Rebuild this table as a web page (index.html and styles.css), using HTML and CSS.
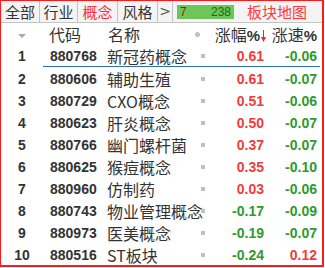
FILE: index.html
```html
<!DOCTYPE html>
<html>
<head>
<meta charset="utf-8">
<link rel="stylesheet" href="styles.css">
</head>
<body>
<div class="panel">
  <div class="tabs">
    <div class="tab w39">全部</div>
    <div class="tab w38">行业</div>
    <div class="tab w40 active">概念</div>
    <div class="tab w40">风格</div>
    <div class="tab arrow">&gt;</div>
    <div class="bar"><span class="bar-a">7</span><span class="bar-b">238</span></div>
    <div class="map">板块地图</div>
  </div>
  <div class="row head">
    <div class="c-num"><span class="tri"></span></div>
    <div class="c-code">代码</div>
    <div class="c-name">名称</div>
    <div class="c-dot"><span class="dot round"></span></div>
    <div class="c-pct">涨幅<b>%</b><svg class="down" width="5" height="12" viewBox="0 0 5 12"><path d="M2.5 0V11" stroke="#ff2020" stroke-width="1"/><path d="M0 7L2.5 12L5 7Z" fill="#ff2020"/></svg></div>
    <div class="c-spd">涨速<b>%</b></div>
  </div>
  <div class="row sel"><div class="c-num">1</div><div class="c-code">880768</div><div class="c-name">新冠药概念</div><div class="c-dot"><span class="dot"></span></div><div class="c-pct up">0.61</div><div class="c-spd dn">-0.06</div></div>
  <div class="row"><div class="c-num">2</div><div class="c-code">880606</div><div class="c-name">辅助生殖</div><div class="c-dot"><span class="dot"></span></div><div class="c-pct up">0.61</div><div class="c-spd dn">-0.07</div></div>
  <div class="row"><div class="c-num">3</div><div class="c-code">880729</div><div class="c-name">CXO概念</div><div class="c-dot"><span class="dot"></span></div><div class="c-pct up">0.51</div><div class="c-spd dn">-0.06</div></div>
  <div class="row"><div class="c-num">4</div><div class="c-code">880623</div><div class="c-name">肝炎概念</div><div class="c-dot"><span class="dot"></span></div><div class="c-pct up">0.50</div><div class="c-spd dn">-0.07</div></div>
  <div class="row"><div class="c-num">5</div><div class="c-code">880766</div><div class="c-name">幽门螺杆菌</div><div class="c-dot"><span class="dot"></span></div><div class="c-pct up">0.37</div><div class="c-spd dn">-0.07</div></div>
  <div class="row"><div class="c-num">6</div><div class="c-code">880625</div><div class="c-name">猴痘概念</div><div class="c-dot"><span class="dot"></span></div><div class="c-pct up">0.35</div><div class="c-spd dn">-0.10</div></div>
  <div class="row"><div class="c-num">7</div><div class="c-code">880960</div><div class="c-name">仿制药</div><div class="c-dot"><span class="dot"></span></div><div class="c-pct up">0.03</div><div class="c-spd dn">-0.06</div></div>
  <div class="row"><div class="c-num">8</div><div class="c-code">880743</div><div class="c-name">物业管理概念</div><div class="c-dot"><span class="dot"></span></div><div class="c-pct dn">-0.17</div><div class="c-spd dn">-0.09</div></div>
  <div class="row"><div class="c-num">9</div><div class="c-code">880973</div><div class="c-name">医美概念</div><div class="c-dot"><span class="dot"></span></div><div class="c-pct dn">-0.19</div><div class="c-spd dn">-0.07</div></div>
  <div class="row"><div class="c-num">10</div><div class="c-code">880516</div><div class="c-name">ST板块</div><div class="c-dot"><span class="dot"></span></div><div class="c-pct dn">-0.24</div><div class="c-spd up">0.12</div></div>
</div>
</body>
</html>
```
FILE: styles.css
```css
html, body { margin: 0; padding: 0; background: #fff; }
.panel {
  width: 324px;
  height: 267px;
  box-sizing: border-box;
  border: 2px solid #ff1a1a;
  border-top-width: 1px;
  border-left-width: 1px;
  font-family: "Noto Sans CJK SC", "Noto Sans", sans-serif;
  color: #333;
  overflow: hidden;
}
.tabs {
  display: flex;
  align-items: center;
  height: 21px;
  background: #f4f4f4;
  border-bottom: 1px solid #c4c4c4;
  font-size: 15px;
}
.tab {
  height: 21px;
  line-height: 21px;
  text-align: center;
  border-right: 1px solid #c4c4c4;
  box-sizing: border-box;
  color: #333;
}
.w39 { width: 39px; }
.w38 { width: 38px; }
.w40 { width: 40px; }
.tab.active { color: #ff3030; }
.tab.arrow { width: 15px; color: #555; font-family: "DejaVu Sans", sans-serif; font-size: 14px; }
.bar {
  margin-left: 4px;
  width: 57px;
  height: 14px;
  background: #6cc65a;
  border-left: 1px solid #e08a3a;
  display: flex;
  justify-content: space-between;
  align-items: center;
  box-sizing: border-box;
  padding: 0 3px 0 2px;
  font-family: "Liberation Sans", sans-serif;
  font-size: 12px;
}
.bar-a { color: #b01010; }
.bar-b { color: #1f6a10; }
.map { margin-left: 13px; color: #ff3a3a; font-size: 15px; }
.row {
  display: grid;
  grid-template-columns: 42px 60px 92px 15px 54px 53px;
  height: 22px;
  align-items: center;
  font-family: "Liberation Sans", sans-serif;
  font-weight: bold;
  font-size: 14px;
}
.row.sel .c-code, .row.sel .c-name, .row.sel .c-dot, .row.sel .c-pct, .row.sel .c-spd {
  border-bottom: 1px solid #2a6fb8;
  height: 22px;
  line-height: 22px;
  box-sizing: border-box;
}
.row.sel .c-spd { margin-right: -3px; padding-right: 3px; }
.c-num { text-align: center; color: #333; }
.c-code { padding-left: 7px; color: #333; }
.c-name { font-family: "Noto Sans CJK SC", sans-serif; font-weight: normal; font-size: 16px; color: #333; white-space: nowrap; padding-left: 4px; }
.c-dot { display: flex; align-items: center; }
.dot { display: block; width: 4px; height: 4px; background: #c0c0c0; margin-left: 6px; }
.dot.round { border-radius: 50%; width: 5px; height: 5px; margin-left: 0; }
.c-pct { text-align: right; }
.c-spd { text-align: right; }
.up { color: #f03c3c; }
.dn { color: #2e9a2e; }
.head { font-family: "Noto Sans CJK SC", sans-serif; font-weight: normal; font-size: 16px; line-height: 22px; }
.head > div { height: 22px; }
.head .c-code { padding-left: 6px; }
.head .c-name { padding-left: 5px; }
.head .c-pct, .head .c-spd { white-space: nowrap; }
.head .c-pct { margin-left: -12px; margin-right: -2px; }
.head b { font-family: "Liberation Sans", sans-serif; font-weight: bold; font-size: 15px; }
.down { display: inline-block; vertical-align: -1px; margin-left: 1px; }
.tri {
  display: inline-block;
  width: 0; height: 0;
  border-left: 4px solid transparent;
  border-right: 4px solid transparent;
  border-top: 4px solid #aaa;
  transform: translateY(-3px);
}
```
